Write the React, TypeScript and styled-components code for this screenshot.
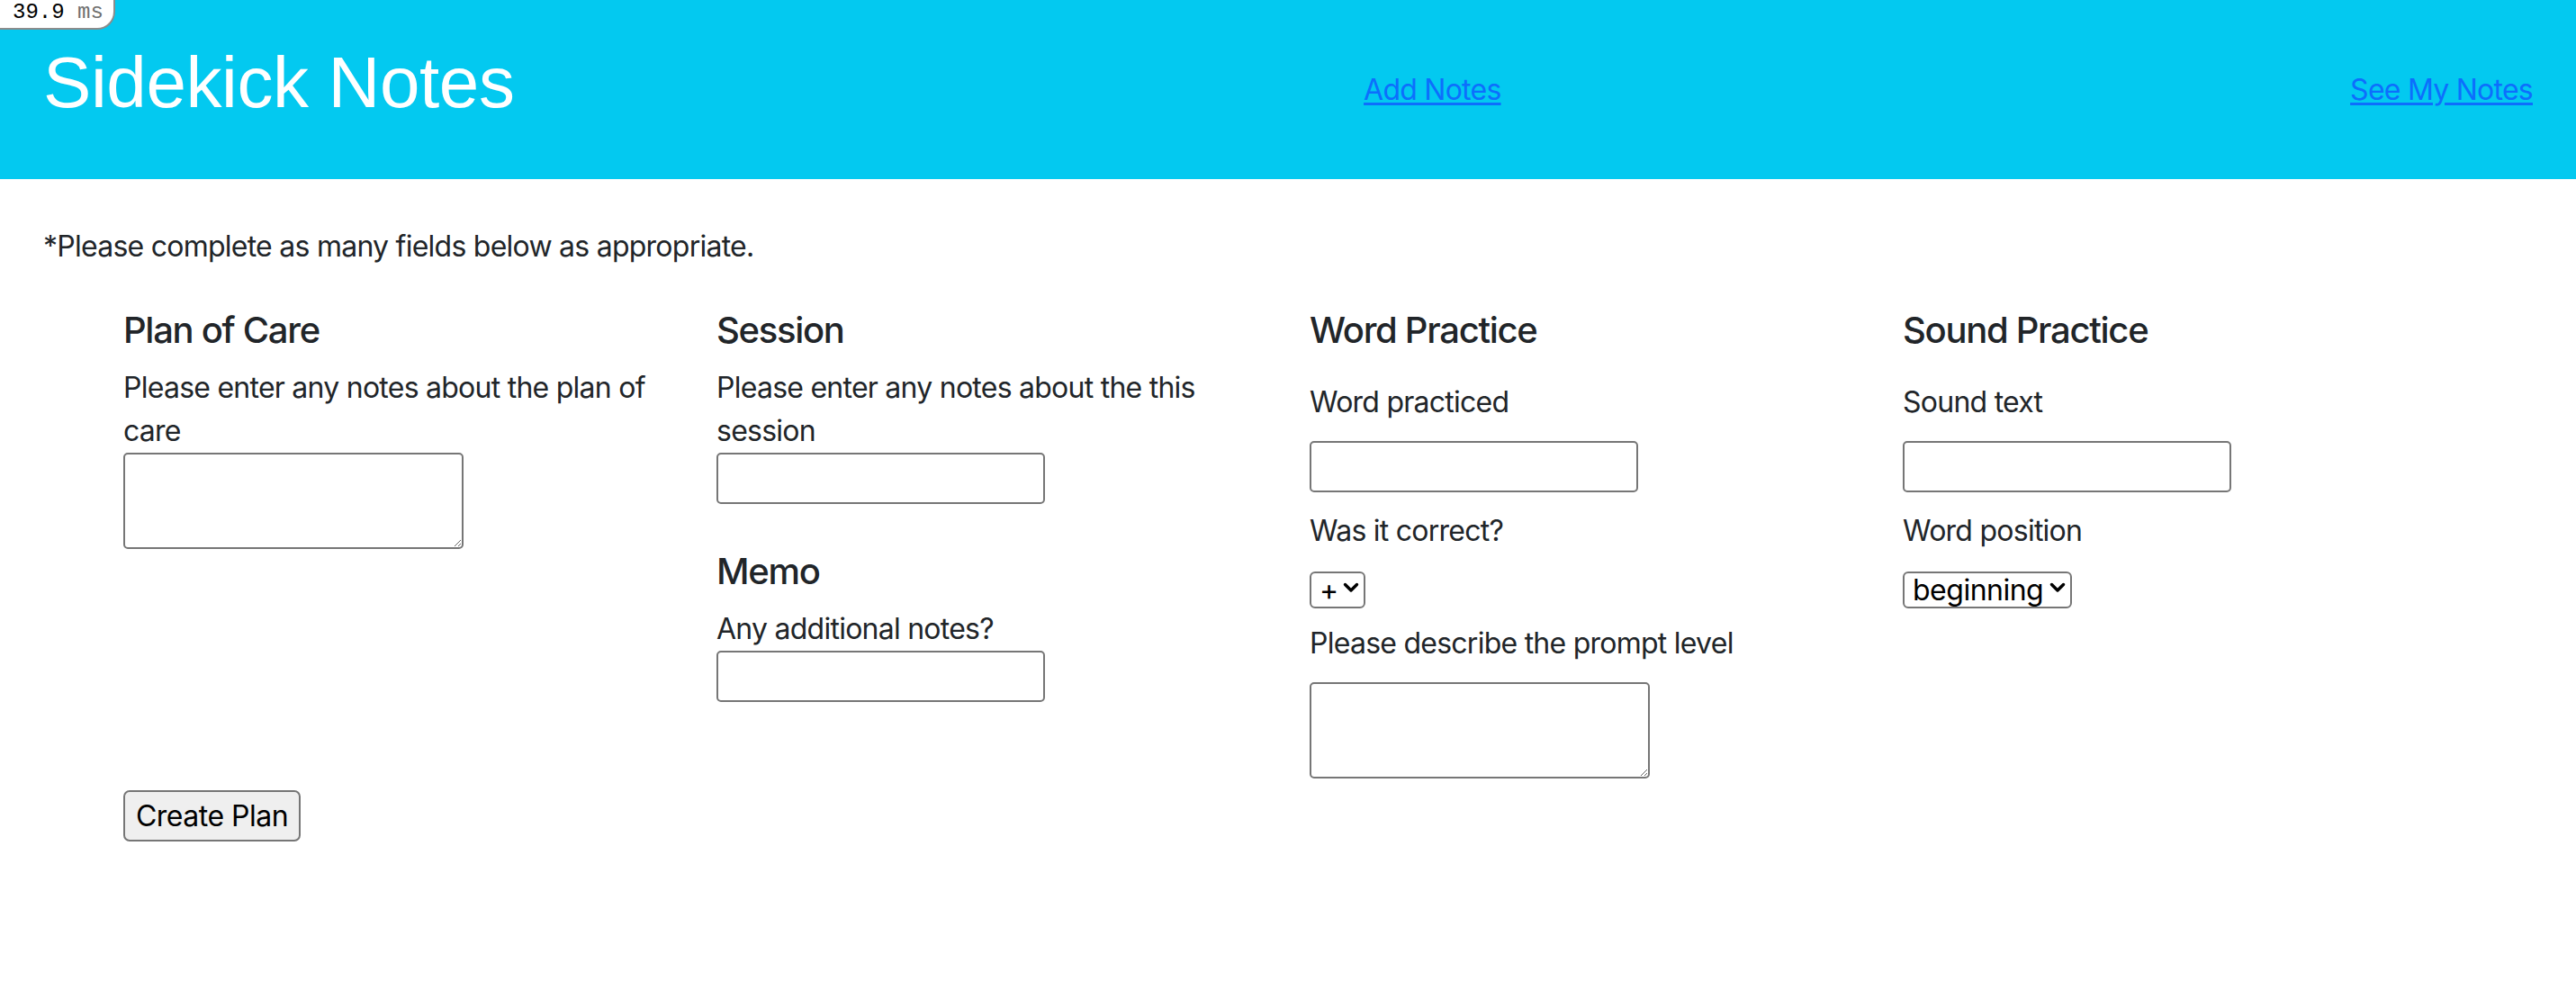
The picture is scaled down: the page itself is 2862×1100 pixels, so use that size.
import React from "react";
import styled, { createGlobalStyle } from "styled-components";

const GlobalStyle = createGlobalStyle`
  html, body {
    margin: 0;
    padding: 0;
    background: #ffffff;
  }
  body {
    font-family: Inter, "Noto Sans", sans-serif;
    font-size: 32px;
    line-height: 48px;
    letter-spacing: -0.75px;
    color: #212529;
  }
  * { box-sizing: border-box; }
`;

const Page = styled.div`
  position: relative;
  min-height: 1100px;
`;

const TimingBadge = styled.div`
  position: absolute;
  top: 0;
  left: 0;
  z-index: 5;
  width: 128px;
  height: 33px;
  padding: 0 0 0 14px;
  background: #ffffff;
  border-right: 2px solid #8c8c8c;
  border-bottom: 2px solid #8c8c8c;
  border-bottom-right-radius: 20px;
  font-family: "Liberation Mono", "DejaVu Sans Mono", monospace;
  font-size: 24px;
  line-height: 28px;
  letter-spacing: 0;
  color: #000000;
  white-space: nowrap;
`;

const BadgeUnit = styled.span`
  color: #6f6f6f;
`;

const Header = styled.header`
  height: 199px;
  background: #03c9f0;
  display: flex;
  align-items: center;
  justify-content: space-between;
  padding: 0 48px;
`;

const Title = styled.h1`
  margin: 0 0 16px;
  font-family: "Liberation Sans", Arial, sans-serif;
  font-weight: 400;
  font-size: 80px;
  line-height: 96px;
  letter-spacing: -0.4px;
  color: #ffffff;
`;

const NavLink = styled.a`
  color: #0d6efd;
  text-decoration: underline;
  text-underline-offset: 3px;
  font-size: 32px;
  line-height: 48px;
`;

const Main = styled.main`
  padding: 51px 48px 0;
`;

const Notice = styled.p`
  margin: 0;
  line-height: 48px;
`;

const Container = styled.form`
  width: 2636px;
  margin: 45px auto 0;
`;

const Row = styled.div`
  display: grid;
  grid-template-columns: repeat(4, 659px);
`;

const Column = styled.section`
  display: flex;
  flex-direction: column;
  align-items: flex-start;
  padding: 0 24px;
`;

const Heading = styled.h5<{ $top?: number }>`
  margin: ${(p) => p.$top ?? 0}px 0 16px;
  font-size: 40px;
  line-height: 48px;
  font-weight: 500;
  letter-spacing: -1.3px;
  color: #212529;
`;

const Label = styled.label`
  display: block;
  font-size: 32px;
  line-height: 48px;
`;

const Stack = styled.div`
  display: flex;
  flex-direction: column;
  align-items: flex-start;
  gap: 19px;
  margin-top: 16px;
`;

const TextInput = styled.input`
  width: 365px;
  height: 57px;
  margin: 0;
  padding: 2px 4px;
  border: 2px solid #767676;
  border-radius: 5px;
  background: #ffffff;
  font: inherit;
`;

const TextArea = styled.textarea`
  width: 378px;
  height: 107px;
  margin: 0;
  padding: 4px;
  border: 2px solid #767676;
  border-radius: 5px;
  background: #ffffff;
  font: inherit;
  resize: both;
  display: block;
`;

const SelectWrap = styled.div<{ $w: number }>`
  position: relative;
  width: ${(p) => p.$w}px;
  height: 41px;
  margin: -1px 0;
`;

const Select = styled.select`
  appearance: none;
  -webkit-appearance: none;
  width: 100%;
  height: 100%;
  margin: 0;
  padding: 0 30px 0 9px;
  border: 2px solid #767676;
  border-radius: 6px;
  background: #ffffff;
  color: #000000;
  font-family: Inter, "Noto Sans", sans-serif;
  font-size: 32px;
  line-height: 37px;
  letter-spacing: -0.5px;
`;

const Chevron = styled.svg`
  position: absolute;
  right: 7px;
  top: 15px;
  width: 18px;
  height: 12px;
  pointer-events: none;
`;

const SubmitButton = styled.button`
  margin: 13px 0 0 24px;
  width: 197px;
  height: 57px;
  padding: 0;
  border: 2px solid #767676;
  border-radius: 7px;
  background: #efefef;
  color: #000000;
  font-family: Inter, "Noto Sans", sans-serif;
  font-size: 32px;
  letter-spacing: -0.5px;
`;

function Dropdown({ width, options }: { width: number; options: string[] }) {
  return (
    <SelectWrap $w={width}>
      <Select defaultValue={options[0]}>
        {options.map((o) => (
          <option key={o} value={o}>
            {o}
          </option>
        ))}
      </Select>
      <Chevron viewBox="0 0 18 12">
        <polyline
          points="2.5,2.5 9,9 15.5,2.5"
          fill="none"
          stroke="#000"
          strokeWidth="3.4"
          strokeLinecap="round"
          strokeLinejoin="round"
        />
      </Chevron>
    </SelectWrap>
  );
}

export default function App() {
  return (
    <Page>
      <GlobalStyle />
      <TimingBadge>
        39.9 <BadgeUnit>ms</BadgeUnit>
      </TimingBadge>
      <Header>
        <Title>Sidekick Notes</Title>
        <NavLink href="#">Add Notes</NavLink>
        <NavLink href="#">See My Notes</NavLink>
      </Header>
      <Main>
        <Notice>*Please complete as many fields below as appropriate.</Notice>
        <Container onSubmit={(e) => e.preventDefault()}>
          <Row>
            <Column>
              <Heading>Plan of Care</Heading>
              <Label>Please enter any notes about the plan of care</Label>
              <TextArea />
            </Column>
            <Column>
              <Heading>Session</Heading>
              <Label>Please enter any notes about the this session</Label>
              <TextInput type="text" />
              <Heading $top={51}>Memo</Heading>
              <Label>Any additional notes?</Label>
              <TextInput type="text" />
            </Column>
            <Column>
              <Heading>Word Practice</Heading>
              <Stack>
                <Label>Word practiced</Label>
                <TextInput type="text" />
                <Label>Was it correct?</Label>
                <Dropdown width={62} options={["+", "-"]} />
                <Label>Please describe the prompt level</Label>
                <TextArea />
              </Stack>
            </Column>
            <Column>
              <Heading>Sound Practice</Heading>
              <Stack>
                <Label>Sound text</Label>
                <TextInput type="text" />
                <Label>Word position</Label>
                <Dropdown width={188} options={["beginning", "middle", "end"]} />
              </Stack>
            </Column>
          </Row>
          <SubmitButton type="submit">Create Plan</SubmitButton>
        </Container>
      </Main>
    </Page>
  );
}
